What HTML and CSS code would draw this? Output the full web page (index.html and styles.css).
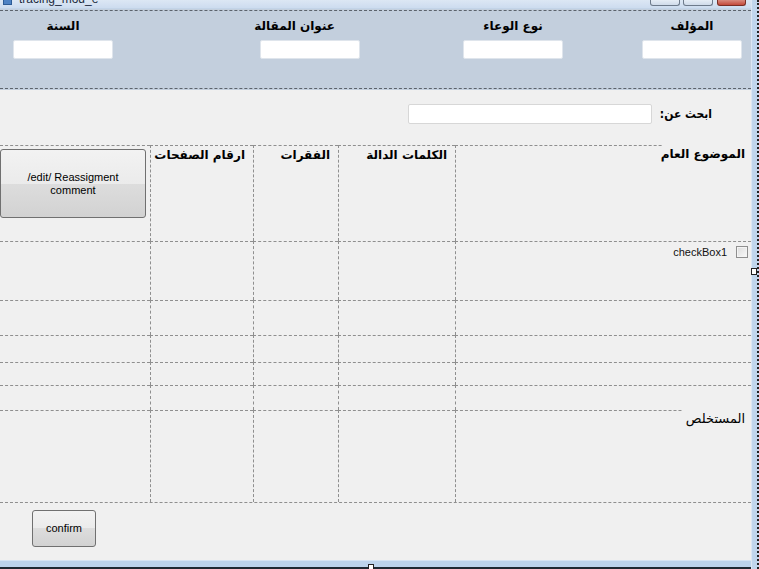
FILE: index.html
```html
<!DOCTYPE html>
<html lang="ar">
<head>
<meta charset="utf-8">
<title>tracing_mod_e</title>
<link rel="stylesheet" href="styles.css">
</head>
<body>
<div class="screen">
  <div class="window">
    <div class="titlebar">
      <span class="app-icon"></span>
      <span class="title-text">tracing_mod_e</span>
      <div class="win-buttons">
        <span class="wbtn"></span>
        <span class="wbtn"></span>
        <span class="wbtn close"></span>
      </div>
    </div>

    <div class="header">
      <div class="header-inner">
        <div class="field f-year">
          <div class="flabel">السنة</div>
          <input class="finput" type="text">
        </div>
        <div class="field f-title">
          <div class="flabel shift">عنوان المقالة</div>
          <input class="finput" type="text">
        </div>
        <div class="field f-type">
          <div class="flabel">نوع الوعاء</div>
          <input class="finput" type="text">
        </div>
        <div class="field f-author">
          <div class="flabel">المؤلف</div>
          <input class="finput" type="text">
        </div>
      </div>
    </div>

    <div class="search-row">
      <div class="search-label">ابحث عن:</div>
      <input class="search-input" type="text">
    </div>

    <div class="table">
      <!-- row 1 -->
      <div class="cell r1"><div class="cover-label w88">الموضوع العام</div></div>
      <div class="cell r1"><div class="hlabel">الكلمات الدالة</div></div>
      <div class="cell r1"><div class="hlabel">الفقرات</div></div>
      <div class="cell r1"><div class="hlabel">ارقام الصفحات</div></div>
      <div class="cell r1 last"><button class="btn big-btn">/edit/ Reassigment<br>comment</button></div>
      <!-- row 2 -->
      <div class="cell r2">
        <label class="check"><span class="box"></span><span class="check-text">checkBox1</span></label>
      </div>
      <div class="cell r2"></div>
      <div class="cell r2"></div>
      <div class="cell r2"></div>
      <div class="cell r2 last"></div>
      <!-- row 3 -->
      <div class="cell r3"></div>
      <div class="cell r3"></div>
      <div class="cell r3"></div>
      <div class="cell r3"></div>
      <div class="cell r3 last"></div>
      <!-- row 4 -->
      <div class="cell r4"></div>
      <div class="cell r4"></div>
      <div class="cell r4"></div>
      <div class="cell r4"></div>
      <div class="cell r4 last"></div>
      <!-- row 5 -->
      <div class="cell r5"></div>
      <div class="cell r5"></div>
      <div class="cell r5"></div>
      <div class="cell r5"></div>
      <div class="cell r5 last"></div>
      <!-- row 6 -->
      <div class="cell r6"></div>
      <div class="cell r6"></div>
      <div class="cell r6"></div>
      <div class="cell r6"></div>
      <div class="cell r6 last"></div>
      <!-- row 7 -->
      <div class="cell r7"><div class="cover-label w69">المستخلص</div></div>
      <div class="cell r7"></div>
      <div class="cell r7"></div>
      <div class="cell r7"></div>
      <div class="cell r7 last"></div>
    </div>

    <div class="footer">
      <button class="btn confirm">confirm</button>
    </div>

    <div class="bframe"></div>
  </div>
  <div class="rframe"></div>
  <span class="handle h-right"></span>
  <span class="handle h-bottom"></span>
</div>
</body>
</html>
```

FILE: styles.css
```css
* { box-sizing: border-box; }

html, body {
  margin: 0;
  padding: 0;
  background: #f0f0f0;
}

.screen {
  position: relative;
  width: 759px;
  height: 569px;
  overflow: hidden;
  display: flex;
  font-family: "Liberation Sans", Arial, sans-serif;
}

.window {
  width: 751px;
  display: flex;
  flex-direction: column;
  background: #f0f0f0;
}

/* title bar (cropped at the top of the shot) */
.titlebar {
  height: 9px;
  flex: none;
  overflow: hidden;
  display: flex;
  align-items: flex-start;
  background: linear-gradient(#dce7f4, #cddcef);
  border-bottom: 1px solid #c3d4e8;
}
.app-icon {
  width: 9px;
  height: 5px;
  margin: 0 0 0 3px;
  background: #4d82c4;
  border: 1px solid #2d5c96;
  border-top: none;
}
.title-text {
  margin: -8px 0 0 7px;
  font-size: 12px;
  line-height: 14px;
  color: #1b2b40;
}
.win-buttons {
  margin-left: auto;
  margin-right: 5px;
  display: flex;
  gap: 3px;
}
.wbtn {
  width: 30px;
  height: 6px;
  border: 1px solid #6d7a8b;
  border-top: none;
  border-radius: 0 0 3px 3px;
  background: linear-gradient(#e6edf6, #cfdbea);
}
.wbtn.close {
  width: 29px;
  margin-left: 1px;
  border-color: #7a2e25;
  background: linear-gradient(#d98a7e, #c3493b);
}

/* header panel */
.header {
  flex: none;
  height: 81px;
  padding: 1px 0;
  background: #c3cfdd;
}
.header-inner {
  height: 79px;
  border-top: 1px dashed #5c636c;
  border-bottom: 1px dashed #5c636c;
  display: flex;
  align-items: flex-start;
  padding-left: 13px;
}
.field {
  width: 100px;
  display: flex;
  flex-direction: column;
  align-items: stretch;
}
.f-title { margin-left: 147px; }
.f-type { margin-left: 103px; }
.f-author { margin-left: 79px; }

.flabel {
  margin-top: 7px;
  height: 16px;
  line-height: 16px;
  text-align: center;
  direction: rtl;
  font-family: "DejaVu Sans", "Liberation Sans", sans-serif;
  font-weight: bold;
  font-size: 12px;
  color: #000;
  white-space: nowrap;
}
.flabel.shift { padding-right: 25px; }

.finput {
  margin: 6px 0 0 0;
  width: 100px;
  height: 19px;
  padding: 0;
  border: 1px solid #dfe5ec;
  border-radius: 2px;
  background: #fff;
  outline: none;
}

/* search row */
.search-row {
  flex: none;
  height: 55px;
  display: flex;
  flex-direction: row-reverse;
  align-items: flex-start;
  padding: 13px 39px 0 0;
}
.search-label {
  width: 37px;
  margin-top: 2px;
  height: 18px;
  line-height: 18px;
  direction: rtl;
  font-family: "DejaVu Sans Condensed", "DejaVu Sans", sans-serif;
  font-weight: bold;
  font-size: 12px;
  white-space: nowrap;
}
.search-input {
  margin: 1px 23px 0 0;
  width: 244px;
  height: 20px;
  padding: 0;
  border: 1px solid #d7d7d7;
  border-radius: 2px;
  background: #fff;
  outline: none;
}

/* grid table */
.table {
  flex: none;
  direction: rtl;
  display: grid;
  grid-template-columns: 296px 117px 85px 103px 150px;
  grid-template-rows: 96px 59px 35px 27px 23px 25px 92px;
  border-bottom: 1px dashed #8f8f8f;
}
.cell {
  border-top: 1px dashed #8f8f8f;
  border-left: 1px dashed #8f8f8f;
  min-width: 0;
}
.cell.last { border-left: none; }

.hlabel {
  padding: 1px 8px 0 0;
  height: 16px;
  line-height: 16px;
  font-family: "DejaVu Sans", "Liberation Sans", sans-serif;
  font-weight: bold;
  font-size: 12px;
  white-space: nowrap;
}
.cover-label {
  margin-top: -1px;
  height: 18px;
  line-height: 18px;
  padding-right: 6px;
  background: #f0f0f0;
  font-family: "DejaVu Sans", "Liberation Sans", sans-serif;
  font-weight: bold;
  font-size: 12px;
  white-space: nowrap;
}
.w88 { width: 88px; }
.w69 { width: 69px; font-weight: normal; font-size: 13px; }

.check {
  display: flex;
  align-items: center;
  gap: 9px;
  padding: 4px 3px 0 0;
}
.box {
  flex: none;
  width: 12px;
  height: 12px;
  border: 1px solid #8f8f8f;
  background: linear-gradient(135deg, #dcdcdc, #fafafa);
  box-shadow: inset 0 0 0 1px #f4f4f4;
}
.check-text {
  direction: ltr;
  font-size: 11px;
  color: #111;
}

.btn {
  display: flex;
  align-items: center;
  justify-content: center;
  padding: 0;
  border: 1px solid #707070;
  border-radius: 3px;
  background: linear-gradient(#f2f2f2 0%, #ebebeb 50%, #dddddd 50%, #d2d2d2 100%);
  font-family: "Liberation Sans", Arial, sans-serif;
  font-size: 11px;
  line-height: 13px;
  color: #000;
  text-align: center;
}
.big-btn {
  margin: 3px 4px 0 0;
  width: 146px;
  height: 69px;
  direction: ltr;
}

/* footer */
.footer {
  flex: none;
  height: 57px;
  padding: 7px 0 0 32px;
}
.confirm {
  width: 64px;
  height: 37px;
}

/* window frame bits */
.bframe {
  flex: none;
  height: 9px;
  background: #bcd4ec;
  border-top: 1px solid #d6e5f4;
  border-bottom: 2px solid #1f2a33;
}
.rframe {
  width: 8px;
  flex: none;
  background: #c0d6ed;
  border-left: 1px solid #dce8f5;
  border-right: 2px dotted #222;
}

.handle {
  position: absolute;
  width: 6px;
  height: 7px;
  background: #fff;
  border: 1px solid #222;
}
.h-right { left: 751px; top: 268px; }
.h-bottom { left: 368px; top: 564px; }
```
